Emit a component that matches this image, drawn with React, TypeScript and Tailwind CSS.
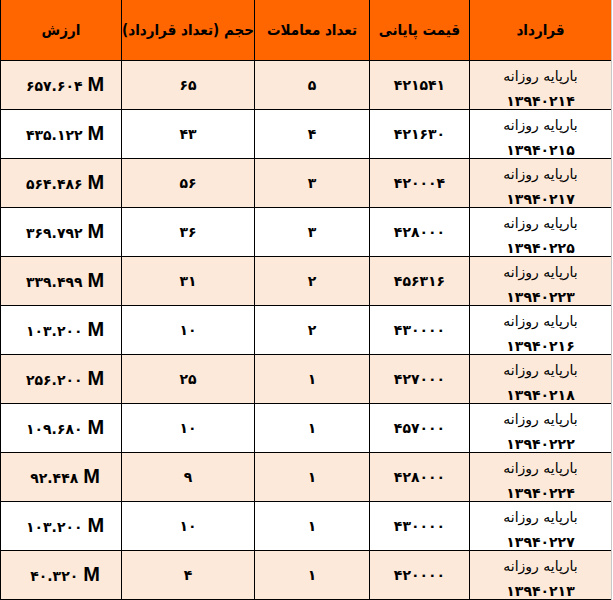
const rows = [
  { value: "۶۵۷.۶۰۴", volume: "۶۵", trades: "۵", price: "۴۲۱۵۴۱", code: "۱۳۹۴۰۲۱۴" },
  { value: "۴۳۵.۱۲۲", volume: "۴۳", trades: "۴", price: "۴۲۱۶۳۰", code: "۱۳۹۴۰۲۱۵" },
  { value: "۵۶۴.۴۸۶", volume: "۵۶", trades: "۳", price: "۴۲۰۰۰۴", code: "۱۳۹۴۰۲۱۷" },
  { value: "۳۶۹.۷۹۲", volume: "۳۶", trades: "۳", price: "۴۲۸۰۰۰", code: "۱۳۹۴۰۲۲۵" },
  { value: "۳۳۹.۴۹۹", volume: "۳۱", trades: "۲", price: "۴۵۶۳۱۶", code: "۱۳۹۴۰۲۲۳" },
  { value: "۱۰۳.۲۰۰", volume: "۱۰", trades: "۲", price: "۴۳۰۰۰۰", code: "۱۳۹۴۰۲۱۶" },
  { value: "۲۵۶.۲۰۰", volume: "۲۵", trades: "۱", price: "۴۲۷۰۰۰", code: "۱۳۹۴۰۲۱۸" },
  { value: "۱۰۹.۶۸۰", volume: "۱۰", trades: "۱", price: "۴۵۷۰۰۰", code: "۱۳۹۴۰۲۲۲" },
  { value: "۹۲.۴۴۸", volume: "۹", trades: "۱", price: "۴۲۸۰۰۰", code: "۱۳۹۴۰۲۲۴" },
  { value: "۱۰۳.۲۰۰", volume: "۱۰", trades: "۱", price: "۴۳۰۰۰۰", code: "۱۳۹۴۰۲۲۷" },
  { value: "۴۰.۳۲۰", volume: "۴", trades: "۱", price: "۴۲۰۰۰۰", code: "۱۳۹۴۰۲۱۳" },
];

const fa = "font-['DejaVu_Sans',sans-serif]";

const App = () => {
  return (
    <div className="w-[613px] h-[600px] bg-white overflow-hidden">
      <div
        dir="rtl"
        className={`w-[612px] border-l border-r border-l-black border-r-[#c8c8c8] text-black ${fa}`}
      >
        {/* header */}
        <div className="flex h-[61px] bg-[#ff6600] border-b border-black font-bold text-[15px] font-['DejaVu_Sans_Condensed','DejaVu_Sans',sans-serif]">
          <div className="w-[142px] border-l border-black flex items-center justify-center">قرارداد</div>
          <div className="w-[100px] border-l border-black flex items-center justify-center">قیمت پایانی</div>
          <div className="w-[115px] border-l border-black flex items-center justify-center">تعداد معاملات</div>
          <div className="w-[133px] border-l border-black flex items-center justify-center whitespace-nowrap">
            حجم (تعداد قرارداد)
          </div>
          <div className="w-[120px] flex items-center justify-center">ارزش</div>
        </div>

        {rows.map((row, index) => (
          <div
            key={index}
            className={`flex h-[49px] border-b border-black text-[14px] ${
              index % 2 === 0 ? "bg-[#fde9d9]" : "bg-white"
            }`}
          >
            <div className="w-[142px] border-l border-black flex flex-col items-center pt-[3px] leading-[25px]">
              <span>بارپایه روزانه</span>
              <span className="font-bold">{row.code}</span>
            </div>
            <div className="w-[100px] border-l border-black flex items-center justify-center font-bold">
              {row.price}
            </div>
            <div className="w-[115px] border-l border-black flex items-center justify-center font-bold">
              {row.trades}
            </div>
            <div className="w-[133px] border-l border-black flex items-center justify-center font-bold">
              {row.volume}
            </div>
            <div className="w-[120px] flex items-center justify-center pl-[8px]">
              <span dir="ltr" className="font-bold whitespace-nowrap">
                {row.value}{" "}
                <span className="font-['Liberation_Sans',sans-serif] text-[20px] leading-none">M</span>
              </span>
            </div>
          </div>
        ))}
      </div>
    </div>
  );
};

export default App;
